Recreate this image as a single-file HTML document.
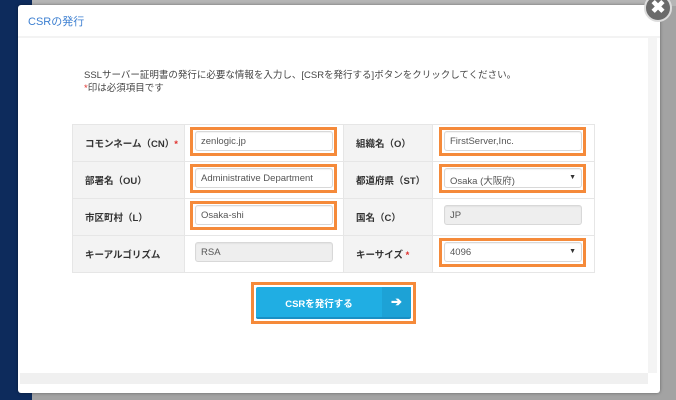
<!DOCTYPE html>
<html><head><meta charset="utf-8"><style>
*{box-sizing:border-box;margin:0;padding:0}
body{width:676px;height:400px;overflow:hidden;background:#a3a3a3;font-family:"Liberation Sans","Noto Sans CJK JP",sans-serif;position:relative}
.navy{position:absolute;left:0;top:0;width:32px;height:400px;background:#0d2b5c}
.topg{position:absolute;left:32px;top:0;width:644px;height:6px;background:#b5b5b5}
.modal{position:absolute;left:18px;top:5px;width:642px;height:388px;background:#fff;border-radius:3px;box-shadow:0 0 3px rgba(0,0,0,.4)}
.title{position:absolute;left:28px;top:13px;font-size:11px;color:#3c7fd1}
.hline{position:absolute;left:18px;top:36px;width:642px;height:2px;background:#f3f3f3}
.vscroll{position:absolute;left:648px;top:38px;width:9px;height:335px;background:#f4f4f4}
.hscroll{position:absolute;left:20px;top:373px;width:628px;height:11px;background:#f0f0f0}
.close{position:absolute;left:644px;top:-6px;width:28px;height:28px;border-radius:50%;background:#6a6a6a;border:2px solid #ddd;color:#fff;font-weight:bold;font-size:18px;text-align:center;line-height:23px}
.intro{position:absolute;left:84px;top:69px;font-size:9.5px;color:#444;line-height:13px}
.red{color:#e0322e}
table{position:absolute;left:72px;top:124px;border-collapse:collapse;font-size:9.5px}
td{border:1px solid #e6e6e6;height:37px;vertical-align:middle;position:relative}
td.l{background:#f3f3f3;font-weight:bold;color:#333;padding-left:12px}
.ob{position:absolute;left:5px;top:2px;width:147px;height:29px;border:3px solid #f58a3a}
.inp{position:absolute;left:10px;top:6px;width:138px;height:20px;border:1px solid #d8d8d8;border-radius:3px;background:#fff;font-size:9.5px;color:#555;padding:4px 5px;box-shadow:inset 0 1px 1px rgba(0,0,0,.05)}
.dis{background:#eee}
.arrow{position:absolute;right:5px;top:5px;font-size:7px;color:#333}
.btnbox{position:absolute;left:251px;top:282px;width:165px;height:42px;border:3px solid #f58a3a}
.btn{position:absolute;left:256px;top:287px;width:155px;height:32px;background:#20aee3;border-radius:2px;border-bottom:2px solid #1a8fc4;color:#fff;font-weight:bold;font-size:9.5px}
.btn .t{position:absolute;left:0;width:126px;text-align:center;top:9px}
.btn .a{position:absolute;right:0;top:0;width:29px;height:30px;background:#1da2d6;text-align:center;line-height:30px;font-size:13px}
</style></head><body>
<div class="navy"></div><div class="topg"></div>
<div class="modal"></div>
<div class="title">CSRの発行</div>
<div class="hline"></div>
<div class="vscroll"></div><div class="hscroll"></div>
<div class="close">✖</div>
<div class="intro">SSLサーバー証明書の発行に必要な情報を入力し、[CSRを発行する]ボタンをクリックしてください。<br><span class="red">*</span>印は必須項目です</div>
<table>
<tr><td class="l" style="width:112px">コモンネーム（CN）<span class="red">*</span></td><td style="width:159px"><div class="ob"></div><div class="inp">zenlogic.jp</div></td><td class="l" style="width:89px">組織名（O）</td><td style="width:162px"><div class="ob" style="left:6px;width:147px"></div><div class="inp" style="left:11px">FirstServer,Inc.</div></td></tr>
<tr><td class="l">部署名（OU）</td><td><div class="ob"></div><div class="inp">Administrative Department</div></td><td class="l">都道府県（ST）</td><td><div class="ob" style="left:6px;width:147px"></div><div class="inp" style="left:11px">Osaka (大阪府)<span class="arrow">▼</span></div></td></tr>
<tr><td class="l">市区町村（L）</td><td><div class="ob"></div><div class="inp">Osaka-shi</div></td><td class="l">国名（C）</td><td><div class="inp dis" style="left:11px">JP</div></td></tr>
<tr><td class="l">キーアルゴリズム</td><td><div class="inp dis">RSA</div></td><td class="l">キーサイズ <span class="red">*</span></td><td><div class="ob" style="left:6px;width:147px"></div><div class="inp" style="left:11px">4096<span class="arrow">▼</span></div></td></tr>
</table>
<div class="btnbox"></div>
<div class="btn"><span class="t">CSRを発行する</span><span class="a">➔</span></div>
</body></html>
